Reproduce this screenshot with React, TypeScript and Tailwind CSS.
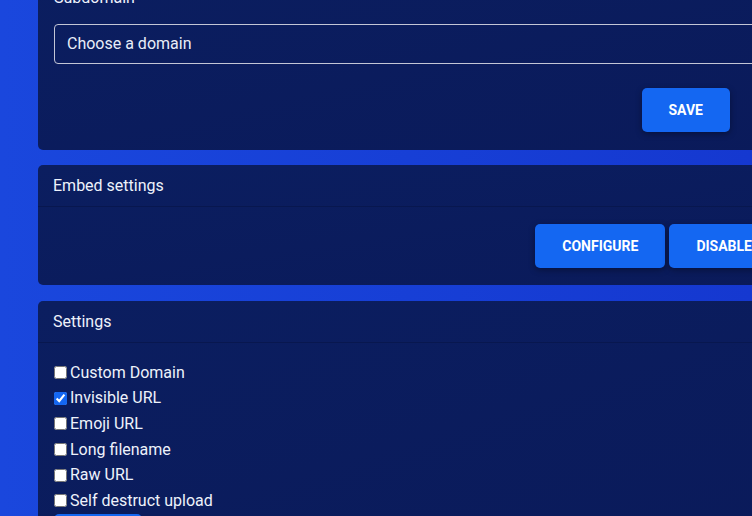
import React, { useState } from "react";

const options = [
  { id: "custom", label: "Custom Domain", checked: false },
  { id: "invisible", label: "Invisible URL", checked: true },
  { id: "emoji", label: "Emoji URL", checked: false },
  { id: "long", label: "Long filename", checked: false },
  { id: "raw", label: "Raw URL", checked: false },
  { id: "destruct", label: "Self destruct upload", checked: false },
];

const Btn = ({ children }: { children: React.ReactNode }) => (
  <button className="h-11 rounded-[5px] bg-[#1467f2] px-[27px] text-[14px] font-bold uppercase text-white shadow-[0_2px_6px_rgba(0,0,0,0.35)]">
    {children}
  </button>
);

const Card = ({ title, children }: { title?: string; children: React.ReactNode }) => (
  <div className="w-[800px] shrink-0 rounded-[5px] bg-gradient-to-br from-[#0b1e60] to-[#0a1a5a]">
    {title && (
      <div className="flex h-[42px] items-center border-b border-[#08174f] px-[15px] text-[16px] text-[#eef2fb]">
        {title}
      </div>
    )}
    {children}
  </div>
);

export default function App() {
  const [checks, setChecks] = useState<Record<string, boolean>>(
    Object.fromEntries(options.map((o) => [o.id, o.checked]))
  );

  return (
    <div
      className="flex h-[516px] w-[752px] flex-col gap-[15px] overflow-hidden bg-gradient-to-r from-[#1a47dd] to-[#1538d0] pl-[38px]"
      style={{ fontFamily: "Roboto, 'Liberation Sans', sans-serif" }}
    >
      <div className="-mt-[30px]">
        <Card>
          <div className="px-4 pt-4 pb-[18px]">
            <div className="mb-[14px] h-6 text-[16px] leading-6 text-[#eef2fb]">Subdomain</div>
            <div className="flex h-10 w-[784px] items-center rounded-[4px] border border-[#c3c6d6] px-3 text-[16px] text-[#e8edf8]">
              Choose a domain
            </div>
            <div className="mt-6 flex w-[676px] justify-end">
              <Btn>Save</Btn>
            </div>
          </div>
        </Card>
      </div>

      <Card title="Embed settings">
        <div className="px-4 pt-[17px] pb-[17px]">
          <div className="flex w-[725px] justify-end gap-1">
            <Btn>Configure</Btn>
            <Btn>Disable</Btn>
          </div>
        </div>
      </Card>

      <div className="mt-[1px]">
        <Card title="Settings">
          <div className="px-4 pt-[17px]">
            {options.map((o) => (
              <label key={o.id} className="flex h-[25.6px] items-center text-[16px] text-[#eef2fb]">
                <input
                  type="checkbox"
                  className="mr-[3px] h-[13px] w-[13px] accent-[#1467f2]"
                  checked={checks[o.id]}
                  onChange={() => setChecks((c) => ({ ...c, [o.id]: !c[o.id] }))}
                />
                {o.label}
              </label>
            ))}
            <div className="h-10 w-[88px] rounded-[5px] bg-[#1467f2]" />
          </div>
        </Card>
      </div>
    </div>
  );
}
